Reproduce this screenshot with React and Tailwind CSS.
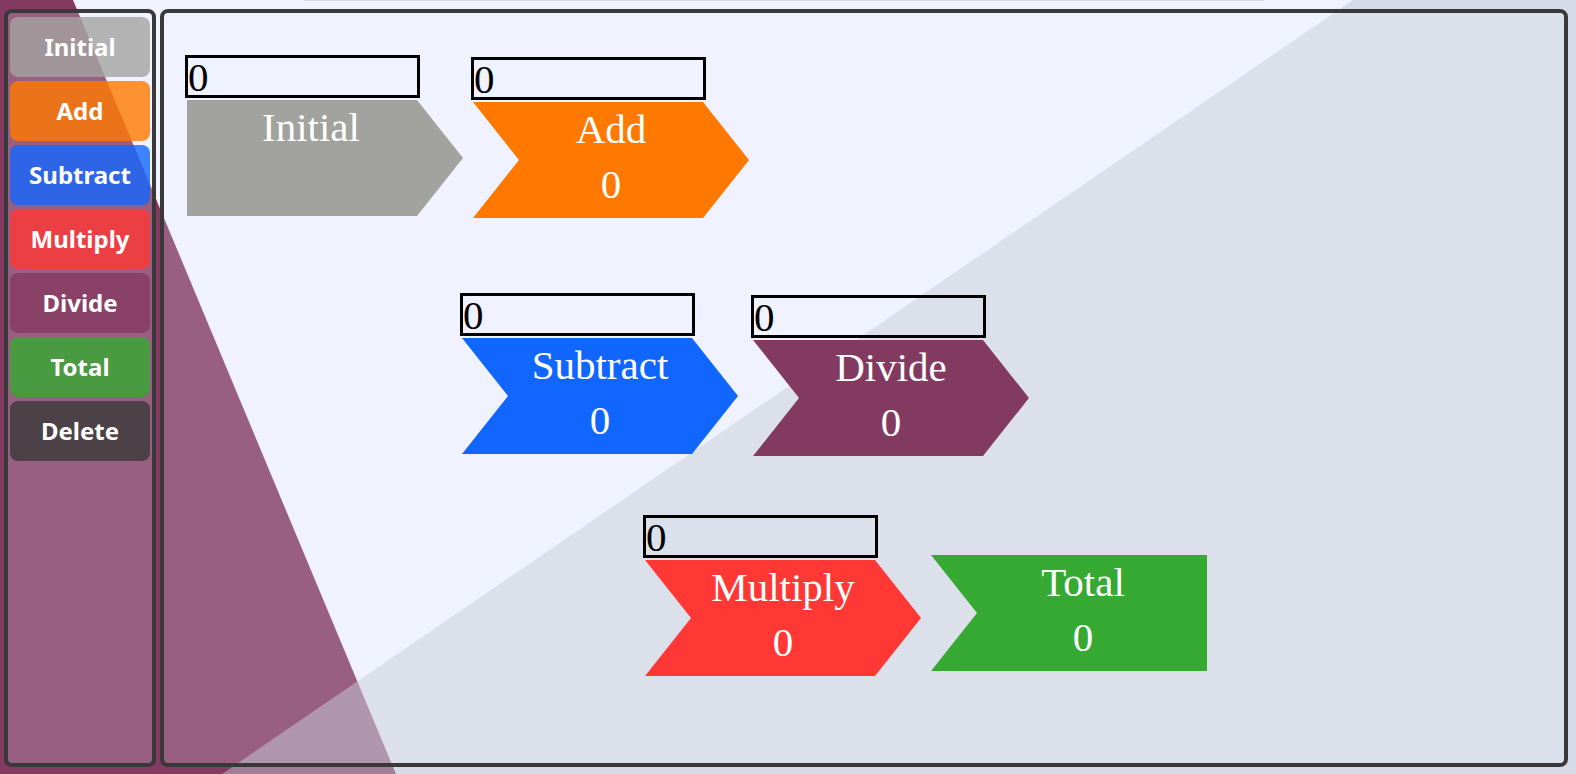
const tools = [
  { label: 'Initial', color: 'bg-[#a2a29f]/80' },
  { label: 'Add', color: 'bg-[#ff7900]/80' },
  { label: 'Subtract', color: 'bg-[#1166ff]/80' },
  { label: 'Multiply', color: 'bg-[#ff3735]/80' },
  { label: 'Divide', color: 'bg-[#853a61]/80' },
  { label: 'Total', color: 'bg-[#36a932]/80' },
  { label: 'Delete', color: 'bg-[#383a38]/80' },
];

const arrow = '[clip-path:polygon(0_0,230px_0,100%_50%,230px_100%,0_100%,46px_50%)]';
const start = '[clip-path:polygon(0_0,230px_0,100%_50%,230px_100%,0_100%)] pr-7';
const end = '[clip-path:polygon(0_0,100%_0,100%_100%,0_100%,46px_50%)] pl-7';

const nodes = [
  { label: 'Initial', input: true, color: 'bg-[#a2a29f]', shape: start, place: 'left-[21px] top-[42px]' },
  { label: 'Add', input: true, value: 0, color: 'bg-[#ff7900]', shape: arrow, place: 'left-[307px] top-[44px]' },
  { label: 'Subtract', input: true, value: 0, color: 'bg-[#1166ff]', shape: arrow, place: 'left-[296px] top-[280px]' },
  { label: 'Divide', input: true, value: 0, color: 'bg-[#833a60]', shape: arrow, place: 'left-[587px] top-[282px]' },
  { label: 'Multiply', input: true, value: 0, color: 'bg-[#ff3735]', shape: arrow, place: 'left-[479px] top-[502px]' },
  { label: 'Total', value: 0, color: 'bg-[#36a932]', shape: end, place: 'left-[765px] top-[542px]' },
];

function Backdrop() {
  return (
    <svg
      className="absolute inset-0 h-full w-full"
      viewBox="0 0 1576 774"
      preserveAspectRatio="none"
      aria-hidden="true"
    >
      <polygon points="0,0 73,0 396,774 0,774" fill="#843a61" />
      <polygon points="1353,0 1576,0 1576,774 222,774" fill="#bdc4cf" fillOpacity="0.5" />
      <rect x="304" y="0" width="960" height="1" fill="#d6d8e5" />
    </svg>
  );
}

function Node({ label, input, value, color, shape, place }) {
  return (
    <div className={`absolute w-[278px] font-['Liberation_Serif',serif] text-[41px] ${place}`}>
      {input && (
        <input
          type="text"
          defaultValue="0"
          aria-label={`${label} amount`}
          className="mb-0.5 block h-[43px] w-[235px] border-3 border-black bg-transparent leading-[37px] text-black outline-none"
        />
      )}
      <div className={`ml-0.5 h-29 w-[276px] text-center leading-[55px] text-white ${color} ${shape}`}>
        <p>{label}</p>
        {value !== undefined && <p>{value}</p>}
      </div>
    </div>
  );
}

export default function App() {
  return (
    <div className="relative flex h-screen gap-1 overflow-hidden bg-[#f0f3ff] pt-[9px] pr-2 pb-[7px] pl-1">
      <Backdrop />
      <nav
        aria-label="Operations"
        className="relative flex w-38 shrink-0 flex-col gap-1 rounded-lg border-4 border-[#39393b] bg-[#f0f3ff]/20 px-0.5 py-1"
      >
        {tools.map(({ label, color }) => (
          <button
            key={label}
            type="button"
            className={`h-15 shrink-0 rounded-lg font-['Noto_Sans',sans-serif] text-2xl font-bold text-white ${color}`}
          >
            {label}
          </button>
        ))}
      </nav>
      <main className="relative min-w-0 flex-1 rounded-lg border-4 border-[#39393b] bg-[#f0f3ff]/20">
        {nodes.map((node) => (
          <Node key={node.label} {...node} />
        ))}
      </main>
    </div>
  );
}
